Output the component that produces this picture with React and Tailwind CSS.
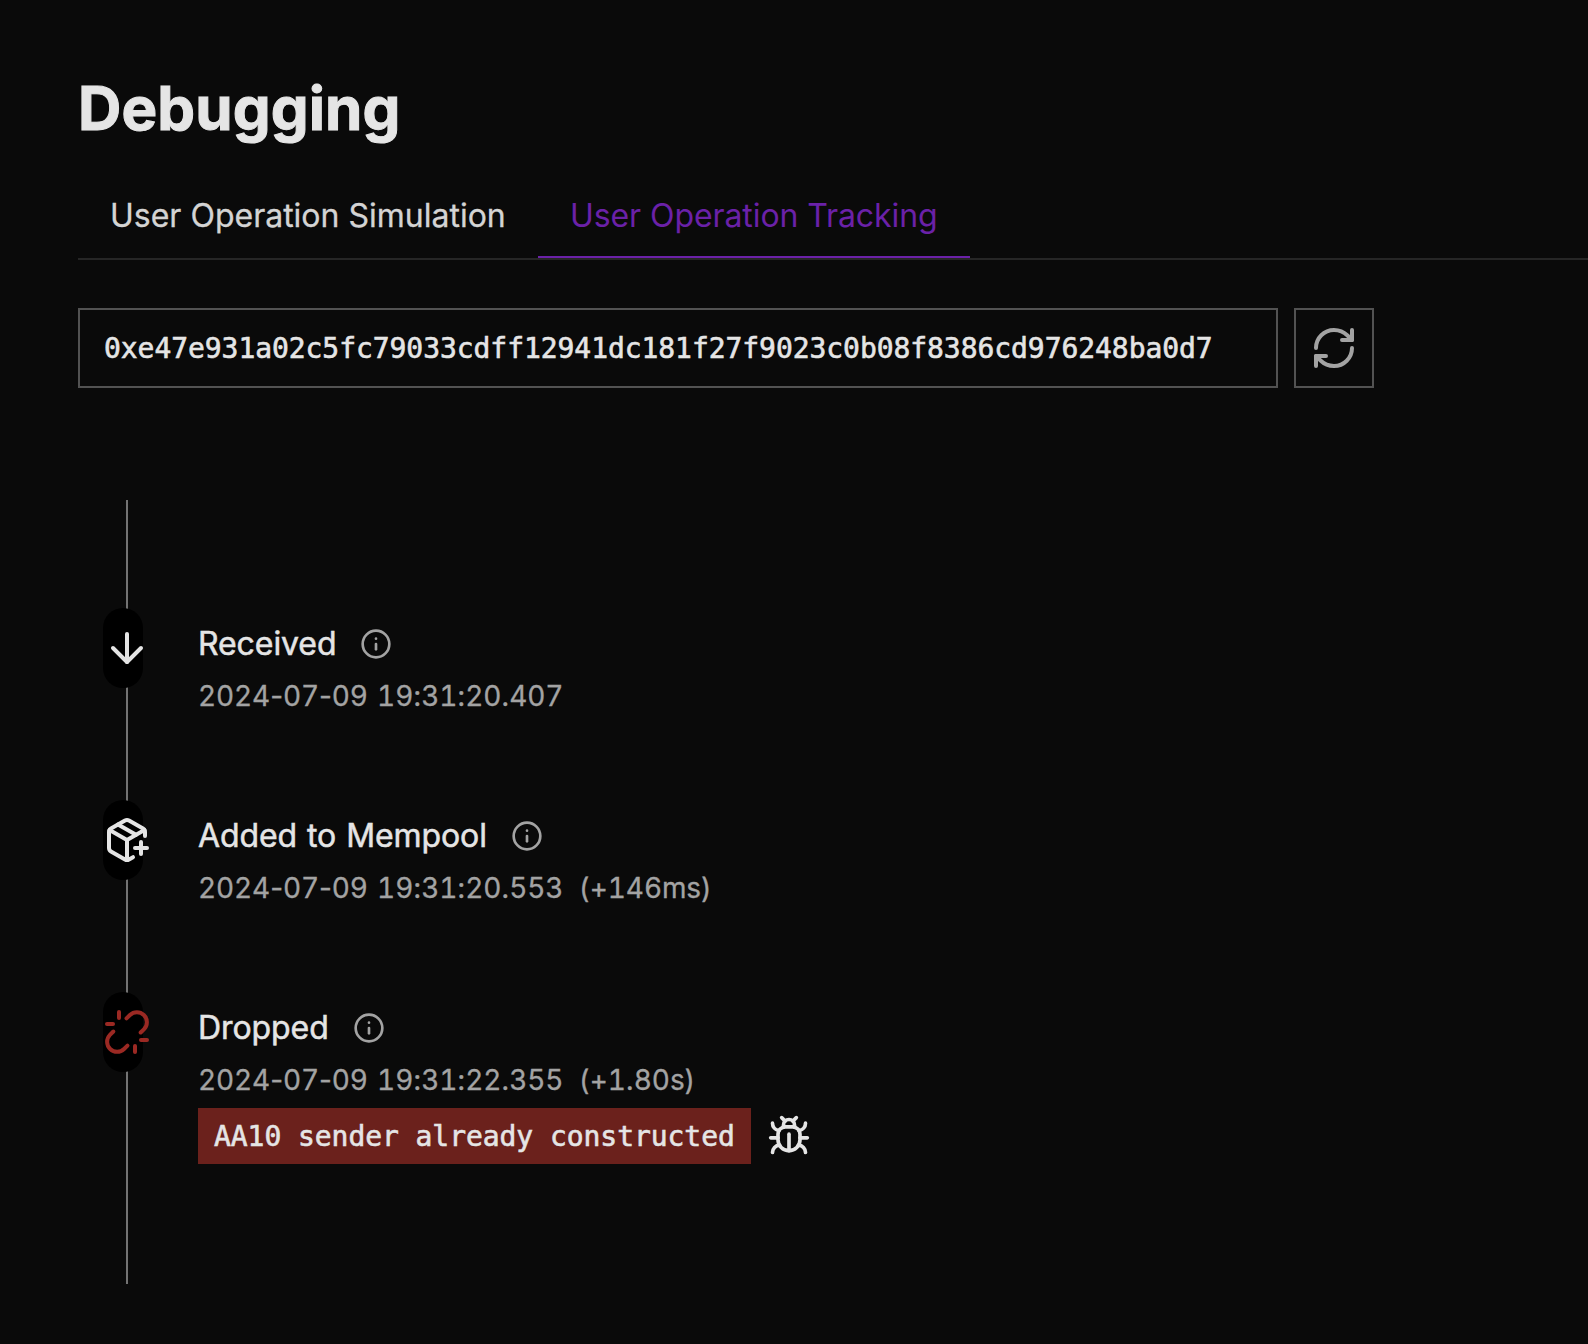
import { ArrowDown, Bug, Info, PackagePlus, Unlink, RefreshCw } from "lucide-react";

// Digits keep a fixed width while punctuation stays proportional.
function Timestamp({ children }) {
  return (
    <span className="whitespace-pre">
      {children.split(/(\d+)/).map((part, i) =>
        i % 2 ? <span key={i} className="tabular-nums">{part}</span> : part
      )}
    </span>
  );
}

function Event({ icon, title, time, delta, children }) {
  return (
    <li className="flex h-48 items-start">
      <div className="flex h-20 w-10 shrink-0 items-center rounded-[20px] bg-black text-[#e5e5e5]">{icon}</div>
      <div className="ml-[55px] pt-3">
        <div className="flex h-12 items-center gap-6 text-[#e5e5e5]">
          <h2 className="text-[32px] leading-12 font-normal tracking-[-0.08px] [word-spacing:1px] [-webkit-text-stroke:0.5px_#e5e5e5]">{title}</h2>
          <Info className="size-8 text-[#a3a3a3]" />
        </div>
        <div className="mt-2 flex h-10 gap-4 text-[28px] leading-10 tracking-[-0.12px] text-[#a3a3a3] [word-spacing:1.5px] [-webkit-text-stroke:0.3px_#a3a3a3]">
          <Timestamp>{time}</Timestamp>
          {delta && <Timestamp>{delta}</Timestamp>}
        </div>
        {children}
      </div>
    </li>
  );
}

export default function App() {
  return (
    <main className="h-[1344px] overflow-hidden bg-[#0a0a0a] pt-[72px] pl-[78px] font-['Inter',sans-serif] antialiased">
      <h1 className="text-[60px] leading-[72px] font-bold tracking-[0.1px] text-[#e5e5e5] [-webkit-text-stroke:1px_#e5e5e5]">Debugging</h1>
      <nav className="mt-10 flex h-[76px] border-b-2 border-[#262626] text-[32px] leading-12 text-[#d4d4d4]">
        <div className="w-[460px] pt-2 pl-8 whitespace-nowrap [-webkit-text-stroke:0.3px_#d4d4d4]">User Operation Simulation</div>
        <div className="w-[432px] border-b-2 border-[#6b21a8] pt-2 pl-8 tracking-[-0.08px] whitespace-nowrap text-[#6b21a8]">User Operation Tracking</div>
      </nav>
      <div className="mt-12 flex gap-4">
        <div className="flex h-20 w-[1200px] items-center border-2 border-[#525252] pt-0.5 pl-6 font-['DejaVu_Sans_Mono',monospace] text-[28px] tracking-[-0.06px] text-[#e5e5e5] [-webkit-text-stroke:0.6px_#e5e5e5]">
          0xe47e931a02c5fc79033cdff12941dc181f27f9023c0b08f8386cd976248ba0d7
        </div>
        <button className="flex size-20 items-center justify-center border-2 border-[#525252] text-[#a3a3a3]">
          <RefreshCw className="size-12" />
        </button>
      </div>
      <section className="mt-28 grid h-[784px] pl-[25px]">
        <div className="col-start-1 row-start-1 ml-[23px] w-0.5 bg-[#737373]" />
        <ul className="col-start-1 row-start-1 pt-[108px]">
          <Event icon={<ArrowDown className="size-12 shrink-0" />} title="Received" time="2024-07-09 19:31:20.407" />
          <Event icon={<PackagePlus className="size-12 shrink-0" />} title="Added to Mempool" time="2024-07-09 19:31:20.553" delta="(+146ms)" />
          <Event icon={<Unlink className="size-12 shrink-0 text-[#9b2923]" />} title="Dropped" time="2024-07-09 19:31:22.355" delta="(+1.80s)">
            <div className="mt-2 flex items-center gap-4">
              <code className="flex h-14 w-[553px] items-center bg-[#6b211c] pt-0.5 pl-4 font-['DejaVu_Sans_Mono',monospace] text-[28px] tracking-[-0.06px] whitespace-nowrap text-[#e5e5e5] [-webkit-text-stroke:0.6px_#e5e5e5]">
                AA10 sender already constructed
              </code>
              <Bug className="size-11 text-[#e5e5e5]" />
            </div>
          </Event>
        </ul>
      </section>
    </main>
  );
}
